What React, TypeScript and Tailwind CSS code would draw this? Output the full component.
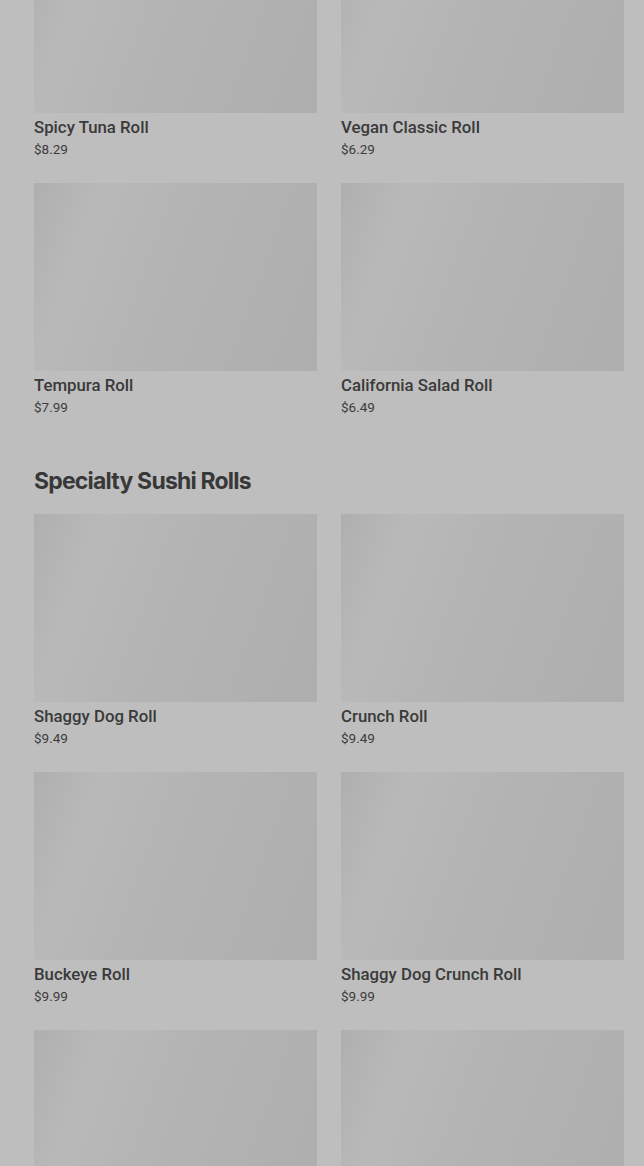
import React from "react";

type Item = { name: string; price: string };

const sec1: Item[] = [
  { name: "Spicy Tuna Roll", price: "$8.29" },
  { name: "Vegan Classic Roll", price: "$6.29" },
  { name: "Tempura Roll", price: "$7.99" },
  { name: "California Salad Roll", price: "$6.49" },
];

const sec2: Item[] = [
  { name: "Shaggy Dog Roll", price: "$9.49" },
  { name: "Crunch Roll", price: "$9.49" },
  { name: "Buckeye Roll", price: "$9.99" },
  { name: "Shaggy Dog Crunch Roll", price: "$9.99" },
  { name: "", price: "" },
  { name: "", price: "" },
];

function Card({ item }: { item: Item }) {
  return (
    <div className="flex flex-col">
      <div className="h-[188px] w-full bg-[linear-gradient(110deg,#afafaf_0%,#b9b9b9_20%,#b4b4b4_45%,#aeaeae_100%)]" />
      {item.name && (
        <div className="mt-[2px] flex flex-col">
          <div className="text-[16.8px] leading-[24px] font-medium text-[#3a3a3a] font-['Roboto',sans-serif]">
            {item.name}
          </div>
          <div className="text-[13.5px] leading-[20px] text-[#3c3c3c] font-['Roboto',sans-serif]">
            {item.price}
          </div>
        </div>
      )}
    </div>
  );
}

export default function App() {
  return (
    <div className="h-[1166px] w-[644px] overflow-hidden bg-[#bebebe]">
      <div className="-mt-[75px] pl-[34px] pr-[20px]">
        <div className="grid grid-cols-2 gap-x-6 gap-y-6">
          {sec1.map((it, i) => (
            <Card key={i} item={it} />
          ))}
        </div>
        <h2 className="mt-[48px] mb-[17px] text-[23px] leading-[32px] font-bold tracking-[-0.035em] text-[#383838] font-['Inter',sans-serif]">
          Specialty Sushi Rolls
        </h2>
        <div className="grid grid-cols-2 gap-x-6 gap-y-6">
          {sec2.map((it, i) => (
            <Card key={i} item={it} />
          ))}
        </div>
      </div>
    </div>
  );
}
